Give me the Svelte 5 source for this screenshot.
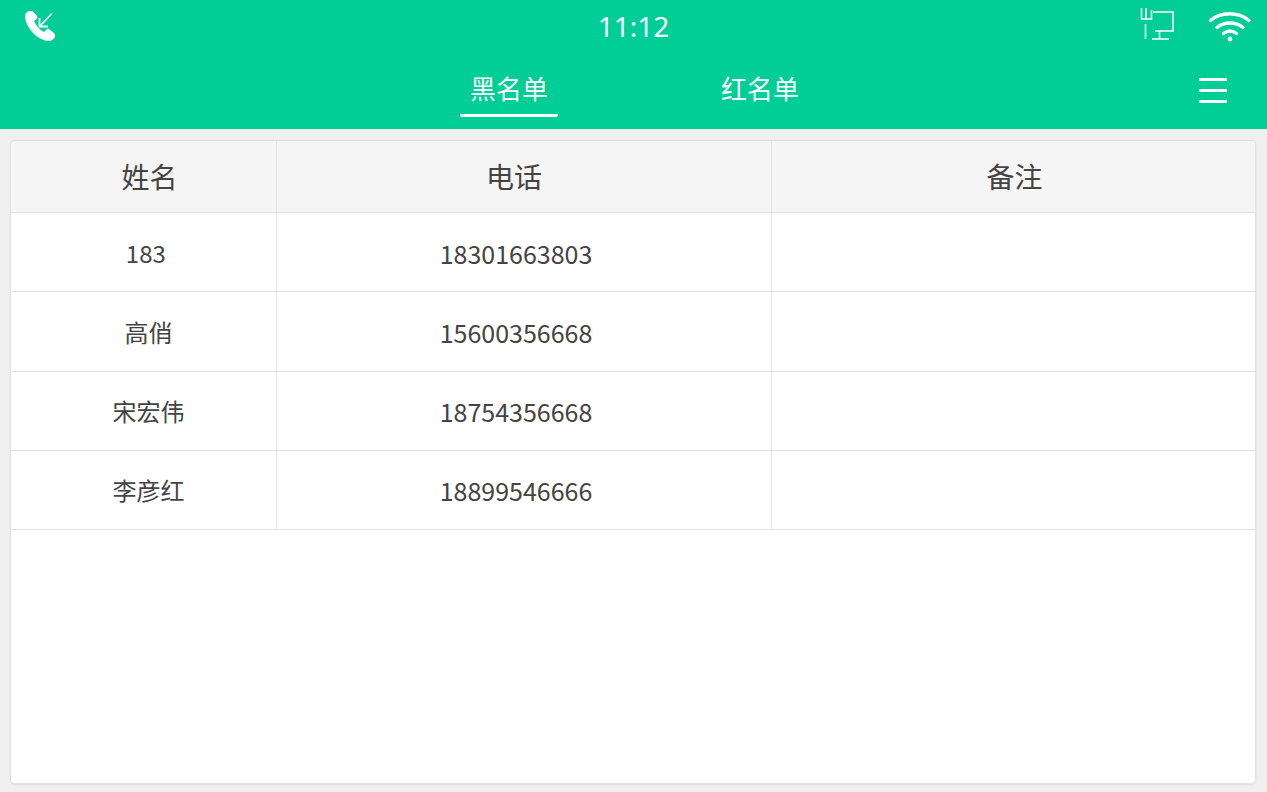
<script>
  const columns = [
    { key: 'name', label: '姓名' },
    { key: 'phone', label: '电话' },
    { key: 'note', label: '备注' }
  ];

  const contacts = [
    { name: '183\u00a0', phone: '18301663803', note: '' },
    { name: '高俏', phone: '15600356668', note: '' },
    { name: '宋宏伟', phone: '18754356668', note: '' },
    { name: '李彦红', phone: '18899546666', note: '' }
  ];

  let tab = $state('black');
</script>

<div class="screen">
  <header class="top">
    <div class="status">
      <svg class="call" width="36" height="36" viewBox="22 8 36 36" aria-hidden="true">
        <path d="M30 11 C28 11 25 13 25 16 C25 22 29 29 34 34 C38 38 44 41 49 41 C52 41 55 38 55 36 L55 34 L49 29 C48 28.5 47 29 46 30 L44 32 C40 30 36 26 34 21 L36.5 19 C37 18 37.5 17 37 16 L33 11.5 Z" fill="#fff"/>
        <path d="M52 13.5 L39.5 26.5 M39.5 18 V26.5 H48" fill="none" stroke="#fff" stroke-width="1.8"/>
      </svg>
      <span class="clock">11:12</span>
      <div class="status-right">
        <svg class="lan" width="38" height="38" viewBox="1138 4 38 38" fill="none" stroke="#fff" stroke-width="1.6" aria-hidden="true">
          <path d="M1141.5 8 V19 H1151.5 V10 M1146 8 V19"/>
          <path d="M1145.5 24 V39"/>
          <path d="M1153 12 H1173 V31 H1155 M1159.5 31 V39 M1152 39 H1169"/>
        </svg>
        <svg width="44" height="32" viewBox="0 0 44 32" fill="none" stroke="#fff" stroke-width="3.4" stroke-linecap="round" aria-hidden="true">
          <path d="M2.5 10.5 C13 1.5 30 1.5 41 10.5"/>
          <path d="M9 17.5 C16 11.5 28 11.5 35 17.5"/>
          <path d="M15.5 23.5 C19.5 20.5 24.5 20.5 28.5 23.5"/>
          <circle cx="22" cy="29" r="2.4" fill="#fff" stroke="none"/>
        </svg>
      </div>
    </div>
    <nav class="tabs">
      <button class="tab" class:active={tab === 'black'} onclick={() => (tab = 'black')}>黑名单</button>
      <button class="tab" class:active={tab === 'red'} onclick={() => (tab = 'red')}>红名单</button>
      <button class="menu" aria-label="菜单"><span></span><span></span><span></span></button>
    </nav>
  </header>

  <main class="card">
    <div class="row head">
      {#each columns as col}
        <div class="cell {col.key}">{col.label}</div>
      {/each}
    </div>
    {#each contacts as contact}
      <div class="row">
        <div class="cell name">{contact.name}</div>
        <div class="cell phone">{contact.phone}</div>
        <div class="cell note">{contact.note}</div>
      </div>
    {/each}
  </main>
</div>

<style>
  :global(body) {
    margin: 0;
    background: #f0f0f0;
    font-family: 'Noto Sans CJK SC', 'Noto Sans', sans-serif;
  }

  .screen {
    height: 792px;
    display: flex;
    flex-direction: column;
    overflow: hidden;
  }

  .top {
    height: 129px;
    flex-shrink: 0;
    background: #00ce96;
    color: #fff;
  }

  .status {
    height: 52px;
    display: grid;
    grid-template-columns: 1fr auto 1fr;
    align-items: center;
    padding: 0 15px;
  }

  .call {
    margin-left: 7px;
  }

  .clock {
    font-family: 'Noto Sans', sans-serif;
    font-size: 28px;
    line-height: 52px;
  }

  .status-right {
    display: flex;
    justify-content: flex-end;
    align-items: center;
    gap: 32px;
  }

  .lan {
    margin-top: -6px;
  }

  .tabs {
    position: relative;
    height: 77px;
    display: flex;
    justify-content: center;
    gap: 153px;
    padding-left: 2px;
  }

  .tab {
    width: 98px;
    height: 65px;
    padding: 8px 0 0;
    margin: 0;
    background: none;
    border: 0;
    border-bottom: 3px solid transparent;
    border-radius: 2px;
    color: #fff;
    font: 26px 'Noto Sans CJK SC', sans-serif;
  }

  .tab.active {
    border-bottom-color: #fff;
  }

  .menu {
    position: absolute;
    right: 40px;
    top: 26px;
    width: 28px;
    padding: 0;
    background: none;
    border: 0;
    display: flex;
    flex-direction: column;
    gap: 8px;
  }

  .menu span {
    height: 3px;
    background: #fff;
  }

  .card {
    height: 642px;
    margin: 11px 11px 0 10px;
    background: #fff;
    border: 1px solid #e2e2e2;
    border-top-color: #dedede;
    border-radius: 5px;
    overflow: hidden;
    box-shadow: 0 1px 2px rgba(0, 0, 0, 0.08);
  }

  .row {
    height: 78.25px;
    display: grid;
    grid-template-columns: 266px 495px 1fr;
    border-bottom: 1px solid #e2e2e2;
    font-size: 24px;
    color: #444;
  }

  .row.head {
    height: 71px;
    background: #f5f5f5;
    font-size: 28px;
  }

  .cell {
    display: flex;
    align-items: center;
    justify-content: center;
    border-right: 1px solid #e4e4e4;
  }

  .cell.name {
    padding-left: 10px;
  }

  .cell.phone {
    padding: 1px 16px 0 0;
    font-size: 25px;
  }

  .cell.note {
    padding-left: 4px;
    border-right: 0;
  }

  .head .cell {
    padding-bottom: 2px;
  }

  .head .cell.name {
    padding-left: 12px;
  }

  .head .cell.phone {
    padding: 0 20px 2px 0;
    font-size: 28px;
  }

  .head .cell.note {
    padding-left: 2px;
  }
</style>
